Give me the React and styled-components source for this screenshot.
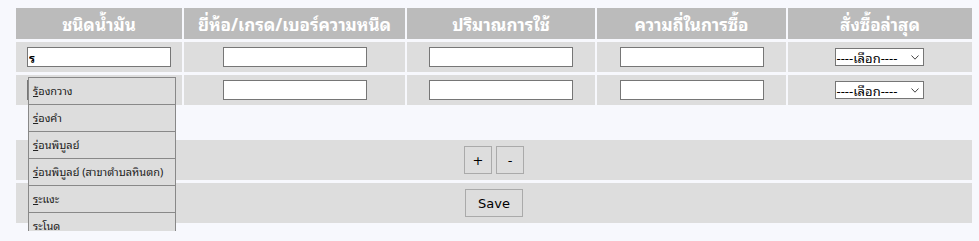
import React from "react";
import styled, { createGlobalStyle } from "styled-components";

const Global = createGlobalStyle`
  html, body { margin: 0; padding: 0; background: #f7f8fd; }
  body { font-family: Tahoma, "Noto Sans Thai Looped", "Noto Sans Thai", Loma, Garuda, "DejaVu Sans", sans-serif; }
`;

const Page = styled.div`
  padding: 5px 14px;
`;

const Table = styled.table`
  border-collapse: separate;
  border-spacing: 2px 3px;
  table-layout: fixed;
  width: 960px;
`;

const HeadCell = styled.th`
  background: #bbbbbb;
  color: #ffffff;
  font-size: 17px;
  line-height: 20px;
  font-weight: bold;
  height: 31px;
  padding: 0;
  text-align: center;
  vertical-align: middle;
  width: ${(p) => p.$w}px;
`;

const Cell = styled.td`
  background: #dddddd;
  height: 30px;
  padding: 0;
  font-size: 13px;
  line-height: 1;
  text-align: center;
  vertical-align: middle;
  position: ${(p) => (p.$anchor ? "relative" : "static")};
`;

const WideCell = styled.td`
  background: #dddddd;
  height: 40px;
  padding: 0;
  font-size: 13px;
  line-height: 1;
  text-align: center;
  vertical-align: middle;
`;

const Spacer = styled.td`
  height: 29px;
  padding: 0;
`;

const TextInput = styled.input`
  box-sizing: border-box;
  display: block;
  margin: 0 auto;
  width: 144px;
  height: 20px;
  border: 1px solid #767676;
  background: #fff;
  padding: 0 1px;
  font-family: Tahoma, "Noto Sans Thai Looped", "Noto Sans Thai", sans-serif;
  font-size: 12px;
  font-weight: bold;
  color: #000;
  outline: none;
`;

const SelectBox = styled.div`
  box-sizing: border-box;
  display: flex;
  align-items: center;
  justify-content: space-between;
  width: 89px;
  height: 18px;
  margin: 0 auto;
  position: relative;
  left: -1px;
  border: 1px solid #767676;
  background: #fff;
  padding: 0 4px 0 1px;
  font-size: 13px;
  color: #000;
`;

const Chevron = styled.svg`
  width: 8px;
  height: 5px;
  display: block;
`;

const Btn = styled.button`
  box-sizing: border-box;
  width: ${(p) => p.$w}px;
  height: 28px;
  border: 1px solid #aaaaaa;
  background: #dddddd;
  color: #000;
  font-family: Tahoma, "DejaVu Sans", sans-serif;
  font-size: 13px;
  padding: 0;
  margin: 0 2px;
  vertical-align: middle;
`;

const Suggest = styled.ul`
  position: absolute;
  left: 12px;
  top: 35px;
  width: 148px;
  box-sizing: border-box;
  margin: 0;
  padding: 0;
  list-style: none;
  border: 1px solid #888888;
  border-bottom: none;
  z-index: 5;
  text-align: left;
`;

const SuggestItem = styled.li`
  height: 26px;
  line-height: 24px;
  border-bottom: 1px solid #888888;
  background: #dddddd;
  padding-left: 4px;
  font-size: 11px;
  color: #222;
  white-space: nowrap;
  overflow: hidden;
`;

const Match = styled.span`
  text-decoration: underline;
`;

const columns = [
  { t: "ชนิดน้ำมัน", w: 166 },
  { t: "ยี่ห้อ/เกรด/เบอร์ความหนืด", w: 221 },
  { t: "ปริมาณการใช้", w: 188 },
  { t: "ความถี่ในการซื้อ", w: 189 },
  { t: "สั่งซื้อล่าสุด", w: 184 },
];

const suggestions = [
  "้องกวาง",
  "่องคำ",
  "่อนพิบูลย์",
  "่อนพิบูลย์ (สาขาตำบลหินตก)",
  "ะแงะ",
  "ะโนด",
];

function Select() {
  return (
    <SelectBox>
      <span>----เลือก----</span>
      <Chevron viewBox="0 0 8 5">
        <path d="M0.5 0.5 L4 4.2 L7.5 0.5" fill="none" stroke="#444" strokeWidth="1" />
      </Chevron>
    </SelectBox>
  );
}

function DataRow({ first }) {
  return (
    <tr>
      <Cell $anchor={first}>
        <TextInput defaultValue={first ? "ร" : ""} />
        {first && (
          <Suggest>
            {suggestions.map((s) => (
              <SuggestItem key={s}>
                <Match>ร</Match>
                {s}
              </SuggestItem>
            ))}
          </Suggest>
        )}
      </Cell>
      <Cell><TextInput /></Cell>
      <Cell><TextInput /></Cell>
      <Cell><TextInput /></Cell>
      <Cell><Select /></Cell>
    </tr>
  );
}

export default function App() {
  return (
    <>
      <Global />
      <Page>
        <Table>
          <thead>
            <tr>
              {columns.map((c) => (
                <HeadCell key={c.t} $w={c.w}>{c.t}</HeadCell>
              ))}
            </tr>
          </thead>
          <tbody>
            <DataRow first />
            <DataRow />
            <tr><Spacer colSpan={5} /></tr>
            <tr>
              <WideCell colSpan={5}>
                <Btn $w={28}>+</Btn>
                <Btn $w={28}>-</Btn>
              </WideCell>
            </tr>
            <tr>
              <WideCell colSpan={5}>
                <Btn $w={58}>Save</Btn>
              </WideCell>
            </tr>
          </tbody>
        </Table>
      </Page>
    </>
  );
}
